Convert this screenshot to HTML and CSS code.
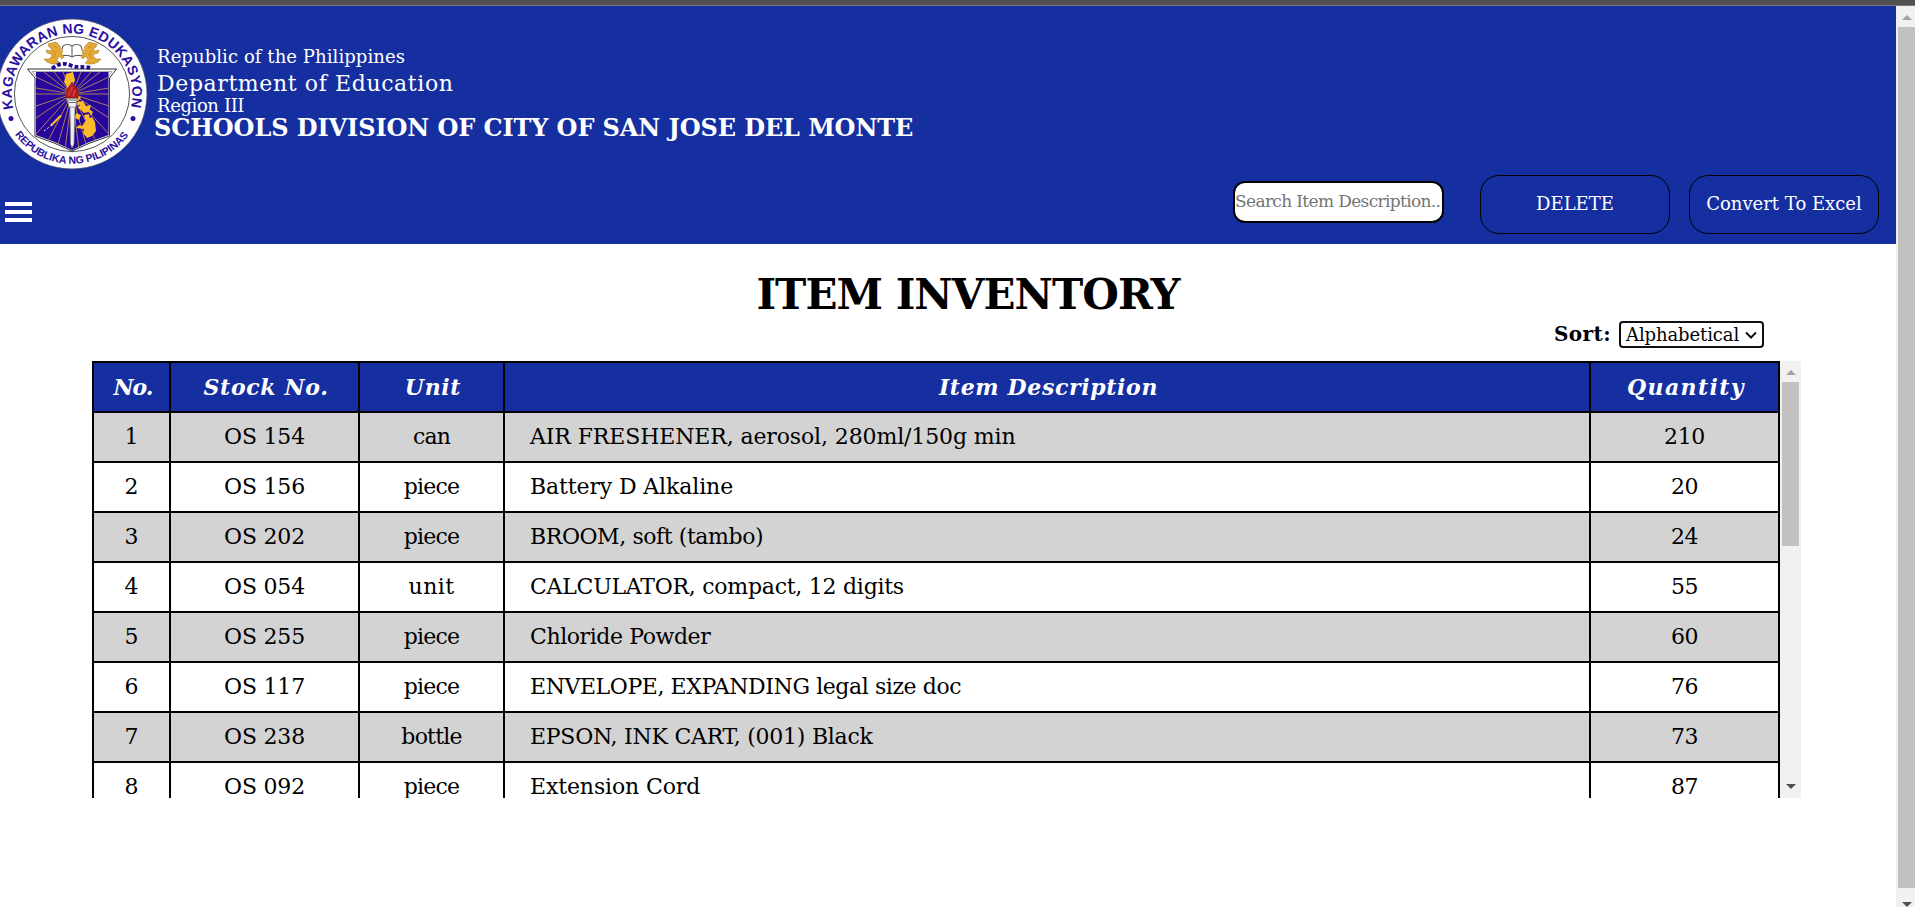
FILE: index.html
```
<!DOCTYPE html>
<html lang="en">
<head>
<meta charset="utf-8">
<title>Item Inventory</title>
<link rel="stylesheet" href="styles.css">
</head>
<body>
<div class="topstrip"></div>
<div class="window">
  <div class="page">
    <header class="header">
      <div class="brand">
        <svg class="seal" width="150" height="152" viewBox="-1 0 150 152">
          <defs>
            <path id="arc-top" d="M12.5 90.5A60.3 60.3 0 1 1 129.5 90.5"/>
            <path id="arc-bottom" d="M14 116.500A70 70 0 0 0 128 116.500"/>
            <clipPath id="shield-clip"><path d="M35 54H107.500V117L88 124L71 132L54 124L35 117Z"/></clipPath>
          </defs>
          <circle cx="71" cy="76" r="75" fill="#fefefe" stroke="#4a4a66" stroke-width=".8"/>
          <circle cx="71" cy="76" r="57.600" fill="#fff" stroke="#444" stroke-width=".9"/>
          <g class="seal-text">
            <text font-size="14"><textPath href="#arc-top" textLength="217" lengthAdjust="spacing">KAGAWARAN NG EDUKASYON</textPath></text>
            <text font-size="10.500"><textPath href="#arc-bottom" textLength="132" lengthAdjust="spacing">REPUBLIKA NG PILIPINAS</textPath></text>
          </g>
          <circle cx="10" cy="100.500" r="2.500" fill="#2a0fa0"/>
          <circle cx="132" cy="100.500" r="2.500" fill="#2a0fa0"/>
          <!-- shield -->
          <path d="M26.500 51H115.500L108.500 60V118L89 125L71 133L53 125L34 118V60Z" fill="#fff" stroke="#333" stroke-width="1"/>
          <path d="M31 53.500H111L107 59V117L88 124L71 131.500L54 124L35.500 117V59Z" fill="#eee" stroke="#777" stroke-width=".6"/>
          <g clip-path="url(#shield-clip)">
            <path d="M35 54H108V134H35Z" fill="#26069b"/>
            <g stroke="#b98a5a" stroke-width=".9">
              <path d="M71 76L35 59M71 76L43 54M71 76L53 54M71 76L62 54M71 76L80 54M71 76L90 54M71 76L99 54M71 76L108 59M71 76L35 70M71 76L108 70M71 76H35M71 76H108M71 76L35 88M71 76L108 88M71 76L35 100M71 76L108 100M71 76L35 116M71 76L108 116M71 76L46 125M71 76L96 125M71 76L56 130M71 76L86 130M71 76L64 132M71 76L78 132"/>
            </g>
            <path d="M65 56L72 54L74 62L72 68L76 76L80 80L77 83L70 80L64 75L66 69L63 64Z" fill="#fbbc2c"/>
            <path d="M76 84L82 83L85 88L90 87L88 94L83 95L80 92L77 90ZM75 95L80 97L78 102L74 100ZM83 97L88 96L89 101L84 102ZM78 107L81 108L85 102L91 99L94 104L95 113L91 118L86 120L82 115L83 111L75 110ZM59 97L61 98L51 108L49 107ZM87 90L92 94L90 98Z" fill="#fbbc2c"/>
            <path d="M76 89L79 87M82 100L84 103" stroke="#26069b"/>
            <path d="M51 107L43 113" stroke="#fff" stroke-dasharray="2 2"/>
          </g>
          <!-- torch -->
          <path d="M69 87H74L73 126L71 130L69.500 126Z" fill="#eee" stroke="#777" stroke-width=".6"/>
          <path d="M65 80H77L75.500 84L75 89H68L67 84Z" fill="#f4f4f4" stroke="#777" stroke-width=".7"/>
          <path d="M67 82H76M68 84.500H75" stroke="#666" stroke-width="1"/>
          <path d="M65 80C63 71 69 69 71 64C73 68 79 71 77 80Z" fill="#b51f24" stroke="#6b1515" stroke-width=".7"/>
          <path d="M68 78C67 74 71 73 71 69M72 78L74 72" stroke="#e25b45" fill="none"/>
          <!-- book and lions -->
          <path d="M62 28C65 26 68 26 71 28C74 26 77 26 80 28L83 38C78 37 74 37 71 39C68 37 64 37 59 38Z" fill="#fff" stroke="#333" stroke-width=".9"/>
          <path d="M71 28V39" stroke="#555"/>
          <g id="lion" fill="#e5aa35" stroke="#9c6d1c" stroke-width=".5">
            <path d="M48 29L47 26L51 25L55 24L58 27L60 30L58 33L61 36L63 39L61 41L58 38L56 42L59 45L55 46L51 46L46 44L43 41L48 41L51 38L50 36L46 35L45 32L49 33L51 31Z"/>
            <path d="M58 31L62 34" stroke="#e5aa35" stroke-width="2"/>
            <path d="M53 28L56 30M52 33L55 36L52 41"/>
          </g>
          <use href="#lion" transform="translate(143 0) scale(-1 1)"/>
          <path d="M51 52C58 47 63 46 70 49C77 52 82 49 91 52" fill="none" stroke="#26069b" stroke-width="3.800" stroke-dasharray="3.800 2.200" transform="translate(0 -1.500)" />
        </svg>
        <div class="titles">
          <div class="line-republic">Republic of the Philippines</div>
          <div class="line-department">Department of Education</div>
          <div class="line-region">Region III</div>
          <div class="line-division">SCHOOLS DIVISION OF CITY OF SAN JOSE DEL MONTE</div>
        </div>
      </div>
      <div class="toolbar">
        <div class="burger"><span></span><span></span><span></span></div>
        <div class="actions">
          <div class="search">Search Item Description..</div>
          <div class="btn btn-delete">DELETE</div>
          <div class="btn">Convert To Excel</div>
        </div>
      </div>
    </header>
    <h1 class="title">ITEM INVENTORY</h1>
    <div class="sort">
      <span class="sort-label">Sort:</span>
      <div class="select"><span>Alphabetical</span><svg width="12" height="8" viewBox="0 0 12 8"><path d="M1 1.500L6 6.500L11 1.500" fill="none" stroke="#111" stroke-width="2"/></svg></div>
    </div>
    <div class="table-box">
      <table class="items">
        <colgroup><col class="c-no"><col class="c-stock"><col class="c-unit"><col class="c-desc"><col class="c-qty"></colgroup>
        <thead><tr><th class="h-no">No.</th><th>Stock No.</th><th>Unit</th><th>Item Description</th><th class="h-qty">Quantity</th></tr></thead>
        <tbody>
          <tr><td>1</td><td>OS 154</td><td class="unit">can</td><td class="desc t1">AIR FRESHENER, aerosol, 280ml/150g min</td><td class="qty">210</td></tr>
          <tr><td>2</td><td>OS 156</td><td class="unit">piece</td><td class="desc t1">Battery D Alkaline</td><td class="qty">20</td></tr>
          <tr><td>3</td><td>OS 202</td><td class="unit">piece</td><td class="desc t3">BROOM, soft (tambo)</td><td class="qty">24</td></tr>
          <tr><td>4</td><td>OS 054</td><td class="unit wide">unit</td><td class="desc t2">CALCULATOR, compact, 12 digits</td><td class="qty">55</td></tr>
          <tr><td>5</td><td>OS 255</td><td class="unit">piece</td><td class="desc t3">Chloride Powder</td><td class="qty">60</td></tr>
          <tr><td>6</td><td>OS 117</td><td class="unit">piece</td><td class="desc t3">ENVELOPE, EXPANDING legal size doc</td><td class="qty">76</td></tr>
          <tr><td>7</td><td>OS 238</td><td class="unit">bottle</td><td class="desc t2">EPSON, INK CART, (001) Black</td><td class="qty">73</td></tr>
          <tr><td>8</td><td>OS 092</td><td class="unit">piece</td><td class="desc t1">Extension Cord</td><td class="qty">87</td></tr>
        </tbody>
      </table>
      <div class="bar bar-table">
        <span class="arrow up"></span>
        <span class="thumb"></span>
        <span class="arrow down"></span>
      </div>
    </div>
  </div>
  <div class="bar bar-page">
    <span class="arrow up"></span>
    <span class="thumb"></span>
    <span class="arrow down"></span>
  </div>
</div>
</body>
</html>
```
FILE: styles.css
```
* { box-sizing: border-box; }
html, body { margin: 0; height: 907px; overflow: hidden; }
body { background: #fff; color: #000; font-family: "DejaVu Serif", serif; }

.topstrip { height: 6px; background: #505050; border-bottom: 1px solid #77777d; }
.window { display: flex; height: 901px; overflow: hidden; }
.page { width: 1896px; }

.header { height: 238px; background: #152ea0; color: #fff; }
.brand { display: flex; height: 165px; padding-top: 12px; }
.seal { display: block; flex: none; }
.seal-text { font-family: "Liberation Sans", sans-serif; font-weight: bold; fill: #2a0fa0; }
.titles { padding: 27px 0 0 7px; white-space: nowrap; }
.line-republic { font-size: 18px; line-height: 24px; letter-spacing: .08px; }
.line-department { font-size: 22px; line-height: 30px; letter-spacing: .61px; }
.line-region { font-size: 18px; line-height: 13px; letter-spacing: -.39px; }
.line-division { margin: 2px 0 0 -3px; font-size: 24px; line-height: 27px; font-weight: bold; letter-spacing: -.1px; }

.toolbar { display: flex; justify-content: space-between; padding: 4px 17px 0 5px; }
.burger { display: flex; flex-direction: column; gap: 4px; padding-top: 27px; }
.burger span { width: 27px; height: 4px; background: #fff; }
.actions { display: flex; align-items: flex-start; }
.search { width: 211px; height: 42px; margin: 6px 36px 0 0; border: 2px solid #000; border-radius: 12px; background: #fff; color: #757575; font-size: 17px; line-height: 37px; letter-spacing: -.65px; white-space: nowrap; overflow: hidden; }
.btn { width: 190px; height: 59px; border: 1px solid #000; border-radius: 19px; font-size: 18px; line-height: 55px; text-align: center; }
.btn-delete { margin-right: 19px; }

.title { margin: 0; padding: 24px 0 0 40px; height: 77px; font-size: 42px; line-height: 54px; letter-spacing: -.95px; text-align: center; }
.sort { display: flex; height: 40px; padding-left: 1554px; }
.sort-label { width: 65px; font-size: 20px; line-height: 27px; font-weight: bold; letter-spacing: .4px; }
.select { display: flex; align-items: center; justify-content: space-between; width: 145px; height: 27px; padding: 0 5px; border: 2px solid #111; border-radius: 4px; font-size: 18px; line-height: 23px; letter-spacing: -.1px; }

.table-box { display: flex; width: 1709px; height: 437px; margin-left: 92px; overflow: hidden; }
.items { flex: none; width: 1688px; height: 450px; table-layout: fixed; border-collapse: separate; border-spacing: 0; font-size: 22px; line-height: 26px; }
.c-no { width: 77px; }
.c-stock { width: 189px; }
.c-unit { width: 145px; }
.c-desc { width: 1086px; }
.c-qty { width: 191px; }
.items th, .items td { height: 50px; padding: 0; border: solid #000; border-width: 2px 0 0 2px; text-align: center; white-space: nowrap; letter-spacing: -.2px; }
.items th { padding: 0 0 0 3px; background: #152ea0; color: #fff; font-style: italic; letter-spacing: .65px; }
.items th:last-child, .items td:last-child { border-right-width: 2px; }
.items tbody tr:nth-child(odd) { background: #d3d3d3; }
.items .h-no { letter-spacing: -1px; }
.items .h-qty { letter-spacing: 1.4px; }
.items .unit { letter-spacing: -.8px; }
.items .wide { letter-spacing: .4px; }
.items .qty { letter-spacing: -.4px; }
.items .desc { padding-left: 25px; text-align: left; }
.items .t1 { letter-spacing: -.12px; }
.items .t2 { letter-spacing: -.25px; }
.items .t3 { letter-spacing: -.42px; }

.bar { display: flex; flex: none; flex-direction: column; align-items: center; background: #f1f1f1; }
.bar .thumb { width: 17px; background: #c1c1c1; }
.arrow { width: 0; height: 0; border: 5px solid transparent; }
.arrow.up { border-top: 0; border-bottom-color: #a3a3a3; }
.arrow.down { border-bottom: 0; border-top-color: #505050; }
.bar-table { width: 21px; }
.bar-table .up { margin: 9px 0 7px; }
.bar-table .thumb { height: 164px; }
.bar-table .down { margin-top: 238px; }
.bar-page { width: 19px; padding-left: 2px; }
.bar-page .up { margin: 9px 0 7px; }
.bar-page .thumb { height: 863px; }
.bar-page .down { margin-top: 14px; }
```
